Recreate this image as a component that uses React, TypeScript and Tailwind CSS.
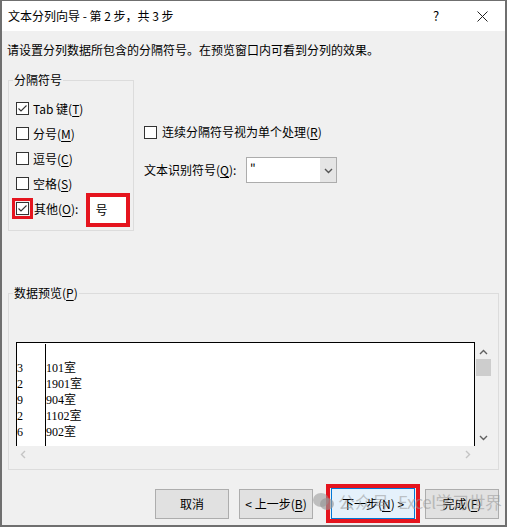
import React from 'react';

const UI = "font-['Noto_Sans_CJK_SC','Noto_Sans',sans-serif] text-[12px] leading-[16px] text-black";
const RED = 'border-[#e5141e]';

function Box({ checked }: { checked?: boolean }) {
  return (
    <span className="flex h-[13px] w-[13px] shrink-0 items-center justify-center border border-[#333333] bg-white">
      {checked && (
        <svg width="11" height="11" viewBox="0 0 11 11">
          <path d="M1.5 5.5 4 8l5.5-5.5" fill="none" stroke="#333333" strokeWidth="1.1" />
        </svg>
      )}
    </span>
  );
}

function Key({ k }: { k: string }) {
  return (
    <>
      (<span className="underline underline-offset-2">{k}</span>)
    </>
  );
}

function Check({ label, k, checked }: { label: string; k: string; checked?: boolean }) {
  return (
    <div className="flex h-[25px] items-center gap-[4px]">
      <Box checked={checked} />
      <span>
        {label}
        <Key k={k} />
      </span>
    </div>
  );
}

function Chevron({ dir, color }: { dir: 'up' | 'down' | 'left' | 'right'; color: string }) {
  const d = {
    up: 'M1 6 4.5 2.5 8 6',
    down: 'M1 3 4.5 6.5 8 3',
    left: 'M6 1 2.5 4.5 6 8',
    right: 'M3 1 6.5 4.5 3 8',
  }[dir];
  return (
    <svg width="9" height="9" viewBox="0 0 9 9">
      <path d={d} fill="none" stroke={color} strokeWidth="1.4" />
    </svg>
  );
}

const rows: [string, string][] = [
  ['', ''],
  ['3', '101室'],
  ['2', '1901室'],
  ['9', '904室'],
  ['2', '1102室'],
  ['6', '902室'],
  ['', ''],
];

export default function App() {
  return (
    <div className={`${UI} relative flex h-[527px] w-[507px] flex-col border-x-2 border-b-2 border-t border-[#6f6f6f] bg-[#f0f0f0]`}>
      {/* 标题栏 */}
      <div className="flex h-[30px] shrink-0 items-center bg-white pl-[6px]">
        <span>文本分列向导 - 第 2 步，共 3 步</span>
        <span className="ml-auto flex w-[46px] justify-center text-[13px]">?</span>
        <span className="flex w-[46px] justify-center">
          <svg width="11" height="11" viewBox="0 0 11 11">
            <path d="M0.5 0.5l10 10M10.5 0.5l-10 10" stroke="#222" strokeWidth="1" />
          </svg>
        </span>
      </div>

      <div className="pl-[5px] pt-[11px]">请设置分列数据所包含的分隔符号。在预览窗口内可看到分列的效果。</div>

      <div className="mt-[22px] flex pl-[6px]">
        {/* 分隔符号 */}
        <div className="relative h-[151px] w-[126px] border border-[#dcdcdc] pl-[7px] pt-[15px]">
          <span className="absolute -top-[9px] left-[4px] bg-[#f0f0f0] px-px">分隔符号</span>
          <Check label="Tab 键" k="T" checked />
          <Check label="分号" k="M" />
          <Check label="逗号" k="C" />
          <Check label="空格" k="S" />
          <div className="flex h-[25px] items-center">
            <span className={`-mx-[4px] flex border-[3px] ${RED} p-px`}>
              <Box checked />
            </span>
            <span className="ml-[5px]">
              其他
              <Key k="O" />:
            </span>
            <span className={`ml-[8px] mt-[2px] flex h-[34px] w-[44px] shrink-0 items-center border-4 ${RED} bg-white pl-[5px]`}>
              号
            </span>
          </div>
        </div>

        <div className="ml-[10px] flex flex-col">
          <div className="mt-[44px] flex h-[16px] items-center gap-[5px]">
            <Box />
            <span>
              连续分隔符号视为单个处理
              <Key k="R" />
            </span>
          </div>
          <div className="mt-[17px] flex items-center">
            <span className="w-[102px]">
              文本识别符号
              <Key k="Q" />:
            </span>
            <div className="flex h-[26px] w-[91px] border border-[#acacac] bg-white">
              <span className="flex-1 pl-[3px] pt-[2px]">"</span>
              <span className="flex w-[16px] items-center justify-center bg-[#e5e5e5]">
                <Chevron dir="down" color="#555" />
              </span>
            </div>
          </div>
        </div>
      </div>

      {/* 数据预览 */}
      <div className="relative ml-[6px] mt-[62px] h-[177px] w-[491px] border border-[#dcdcdc] pl-[7px] pt-[48px]">
        <span className="absolute -top-[9px] left-[4px] bg-[#f0f0f0] px-px">
          数据预览
          <Key k="P" />
        </span>
        <div className="flex">
          <div className="h-[104px] w-[459px] overflow-hidden border-x border-t border-black bg-white pt-px font-['Liberation_Serif','Noto_Sans_CJK_SC',serif]">
            <div className="flex h-full">
              <div className="w-[29px] border-r border-black">
                {rows.map((r, i) => (
                  <div key={i} className="h-[16px] leading-[16px]">
                    {r[0]}
                  </div>
                ))}
              </div>
              <div className="flex-1">
                {rows.map((r, i) => (
                  <div key={i} className="h-[16px] leading-[16px]">
                    {r[1]}
                  </div>
                ))}
              </div>
            </div>
          </div>
          <div className="flex w-[17px] flex-col items-center">
            <span className="mt-[5px] flex h-[10px] items-center">
              <Chevron dir="up" color="#606060" />
            </span>
            <span className="mt-[2px] h-[17px] w-[15px] bg-[#cdcdcd]" />
            <span className="mt-auto mb-[4px] flex h-[10px] items-center">
              <Chevron dir="down" color="#606060" />
            </span>
          </div>
        </div>
        <div className="flex h-[16px] w-[459px] items-center justify-between px-[3px]">
          <Chevron dir="left" color="#c4c4c4" />
          <Chevron dir="right" color="#c4c4c4" />
        </div>
      </div>

      {/* 按钮 */}
      <div className="mt-[14px] flex items-center pl-[153px]">
        <button className="h-[30px] w-[74px] border border-[#adadad] bg-[#e1e1e1]">取消</button>
        <button className="ml-[10px] h-[30px] w-[74px] border border-[#adadad] bg-[#e1e1e1]">
          &lt; 上一步
          <Key k="B" />
        </button>
        <span className={`ml-[13px] flex h-[39px] w-[94px] items-center justify-center border-4 ${RED}`}>
          <button className="h-[31px] w-[84px] border border-[#0078d7] bg-[#e5f1fb]">
            下一步
            <Key k="N" /> &gt;
          </button>
        </span>
        <button className="ml-[5px] h-[30px] w-[74px] border border-[#adadad] bg-[#e1e1e1]">
          完成
          <Key k="F" />
        </button>
      </div>

      {/* 水印 */}
      <div className="pointer-events-none absolute left-[311px] top-[491px] flex items-center text-[17px] leading-[20px] text-[rgba(150,150,150,0.55)]">
        <svg width="22" height="20" viewBox="0 0 22 20">
          <ellipse cx="8" cy="8" rx="8" ry="7" fill="rgba(150,150,150,0.55)" />
          <ellipse cx="14" cy="12" rx="7" ry="6" fill="rgba(150,150,150,0.65)" />
        </svg>
        <span className="ml-[3px]">公众号</span>
        <span className="ml-[9px] tracking-[-0.5px]">Excel学习世界</span>
      </div>
    </div>
  );
}
